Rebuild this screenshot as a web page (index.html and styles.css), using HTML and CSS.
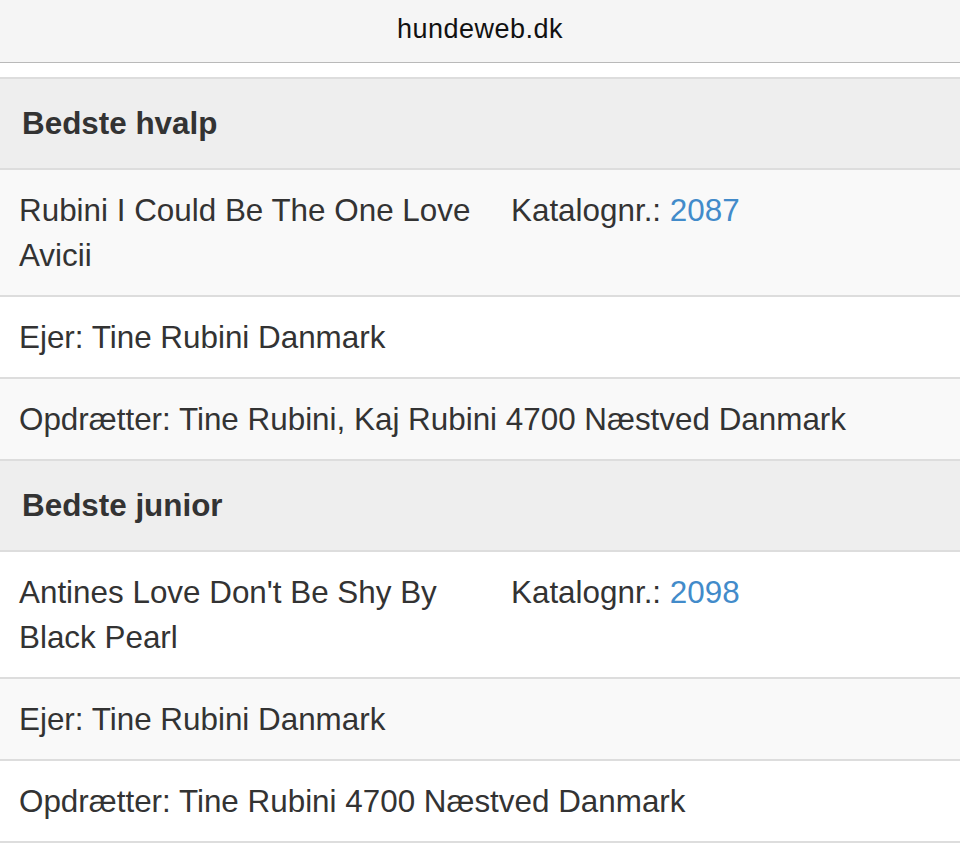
FILE: index.html
```html
<!DOCTYPE html>
<html lang="da">
<head>
<meta charset="utf-8">
<title>hundeweb.dk</title>
<link rel="stylesheet" href="styles.css">
</head>
<body>
<div class="topbar">hundeweb.dk</div>
<div class="list">
  <div class="group-head">Bedste hvalp</div>
  <div class="row odd">
    <div class="dog">Rubini I Could Be The One Love Avicii</div>
    <div class="cat">Katalognr.: <a href="#">2087</a></div>
  </div>
  <div class="row">Ejer: Tine Rubini Danmark</div>
  <div class="row odd">Opdrætter: Tine Rubini, Kaj Rubini 4700 Næstved Danmark</div>
  <div class="group-head">Bedste junior</div>
  <div class="row">
    <div class="dog">Antines Love Don't Be Shy By Black Pearl</div>
    <div class="cat">Katalognr.: <a href="#">2098</a></div>
  </div>
  <div class="row odd">Ejer: Tine Rubini Danmark</div>
  <div class="row">Opdrætter: Tine Rubini 4700 Næstved Danmark</div>
</div>
</body>
</html>
```
FILE: styles.css
```css
html, body {
  margin: 0;
  padding: 0;
  background: #ffffff;
}
body {
  font-family: "Liberation Sans", Arial, Helvetica, sans-serif;
  color: #333333;
}
.topbar {
  height: 58px;
  padding-bottom: 4px;
  line-height: 58px;
  text-align: center;
  font-size: 27px;
  letter-spacing: 0.5px;
  color: #111111;
  background: #f5f5f5;
  border-bottom: 1px solid #b9b9b9;
}
.list {
  margin-top: 14px;
  border-top: 2px solid #dddddd;
}
.group-head {
  background: #eeeeee;
  font-weight: bold;
  font-size: 31.4px;
  line-height: 45px;
  padding: 22px 22px;
  border-bottom: 2px solid #dddddd;
}
.row {
  display: flex;
  gap: 20px;
  font-size: 31.4px;
  line-height: 45px;
  padding: 17.5px 19px;
  background: #ffffff;
  border-bottom: 2px solid #dddddd;
}
.row.odd {
  background: #f9f9f9;
}
.dog {
  width: 472px;
  flex: none;
}
.cat a {
  color: #428bca;
  text-decoration: none;
}
```
